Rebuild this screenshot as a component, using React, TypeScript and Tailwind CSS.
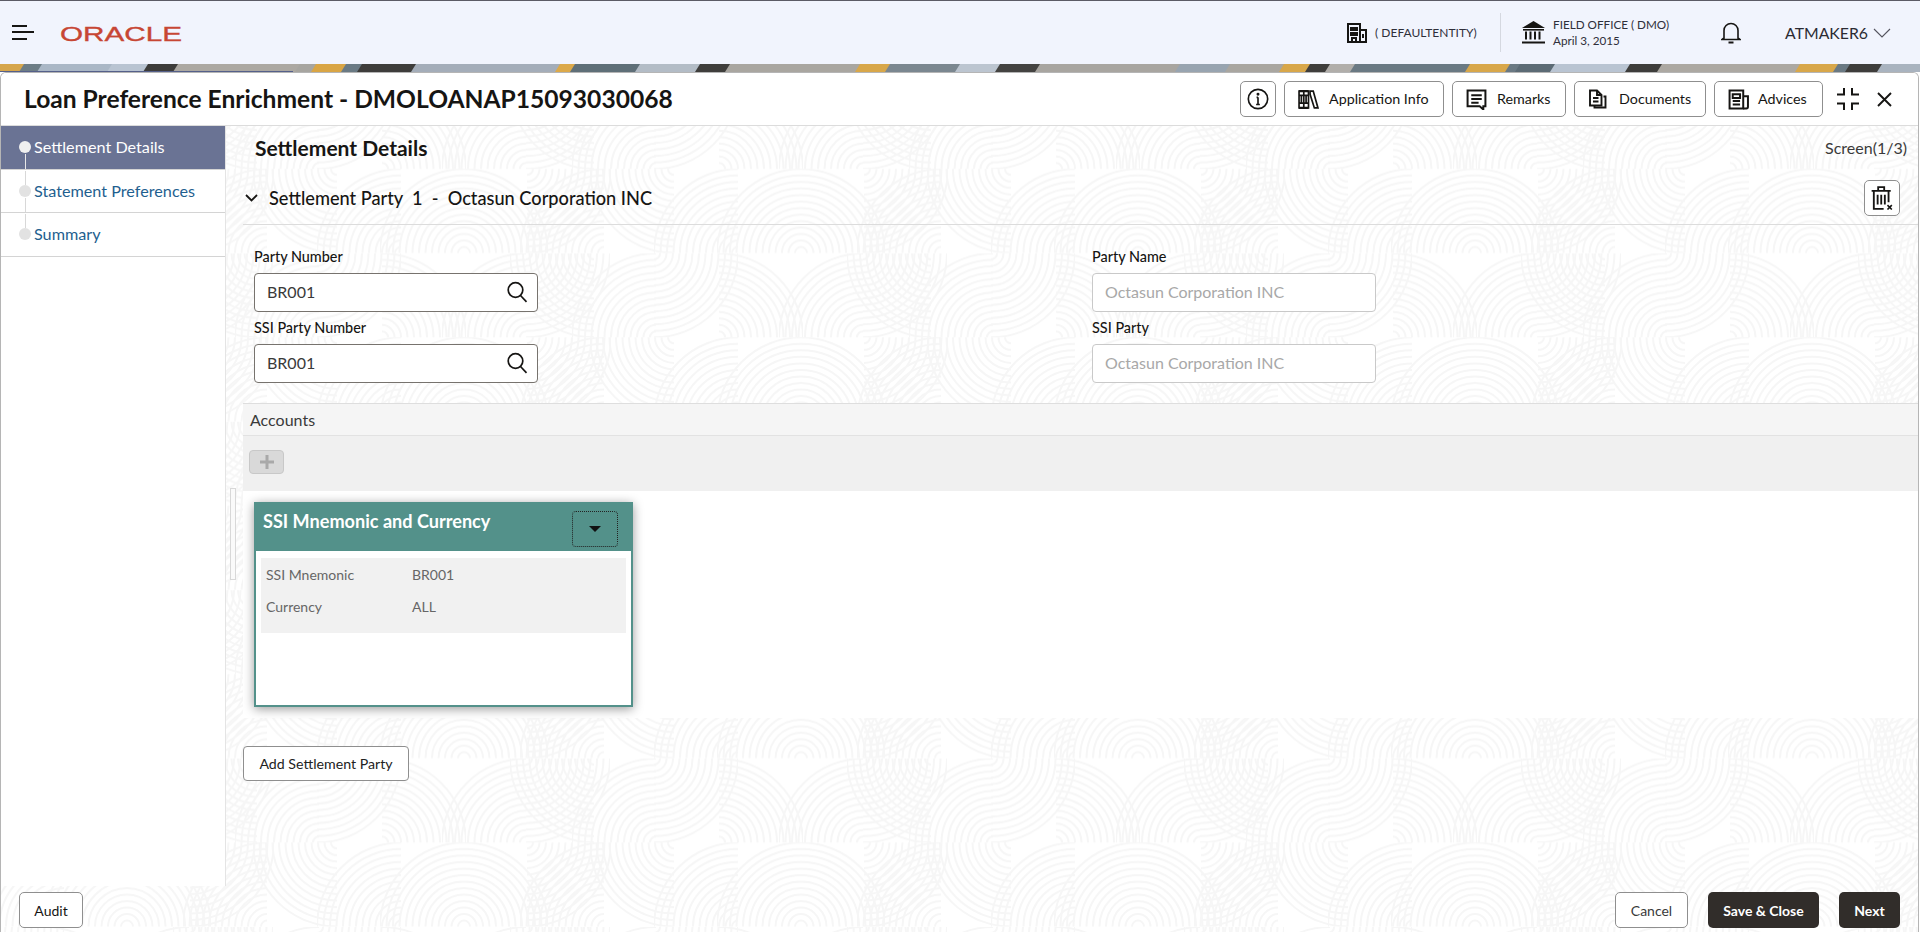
import React from "react";

const font = { fontFamily: '"Lato", "Liberation Sans", sans-serif' };

const quads: [number, number, string][] = [
  [13, 0, "lr"], [78, 84, "ur"], [222, 84, "ul"], [222, 0, "lr"], [15, 84, "ul"], [352, 84, "ul"],
  [97, 168, "ul"], [160, 168, "ul"], [160, 168, "ur"], [33, 84, "ll"], [370, 84, "ll"], [223, 84, "lr"], [300, 168, "ul"], [290, 0, "ll"],
];

function Pattern() {
  const radii = [] as number[];
  for (let r = 6; r <= 84; r += 6.5) radii.push(r);
  return (
    <svg className="absolute inset-0 w-full h-full" aria-hidden="true">
      <defs>
        <pattern id="fp" width="337" height="168.4" patternUnits="userSpaceOnUse" patternTransform="translate(303 12)">
          {quads.map(([cx, cy, q], i) => {
            const x = q[1] === "r" ? cx : cx - 84;
            const y = q[0] === "l" ? cy : cy - 84;
            return (
              <g key={i}>
                <clipPath id={`q${i}`}>
                  <rect x={x} y={y} width="84" height="84" />
                </clipPath>
                <g clipPath={`url(#q${i})`} fill="none" stroke="#f6f6f6" strokeWidth="2">
                  {radii.map((r) => (
                    <circle key={r} cx={cx} cy={cy} r={r} />
                  ))}
                </g>
              </g>
            );
          })}
        </pattern>
      </defs>
      <rect width="100%" height="100%" fill="url(#fp)" />
    </svg>
  );
}

const bands: [number, number, string][] = [
  [0, 24, "#d6a64c"], [24, 42, "#6d7d86"], [42, 112, "#aab7c6"], [112, 148, "#b9c4d2"], [148, 178, "#3d3c3a"], [178, 300, "#aca8a2"],
  [300, 316, "#a7a5a0"], [316, 346, "#d9a545"], [346, 362, "#6a7a84"], [362, 416, "#3e3d3b"], [416, 560, "#a4adb9"], [560, 575, "#dca94a"], [575, 640, "#5f6f78"],
  [640, 700, "#b3bcc6"], [700, 730, "#3f3e3c"], [730, 860, "#a9a6a0"], [860, 890, "#d8a74a"], [890, 960, "#7b8790"], [960, 1000, "#bcc5d0"], [1000, 1040, "#444341"],
  [1040, 1180, "#a8a5a0"], [1180, 1230, "#98a4b0"], [1230, 1284, "#a9a6a0"], [1284, 1310, "#d8a74a"], [1310, 1330, "#3f3e3c"], [1330, 1355, "#b1aeaa"], [1355, 1470, "#6a7983"],
  [1470, 1510, "#d8a74a"], [1510, 1520, "#6a7983"], [1520, 1555, "#5c6b75"], [1555, 1630, "#b9c4d2"], [1630, 1662, "#3e3d3b"], [1662, 1800, "#aca8a2"], [1800, 1838, "#d8a74a"],
  [1838, 1850, "#6a7983"], [1850, 1882, "#3e3d3b"], [1882, 1920, "#a9b3bf"],
];

function Banner() {
  return (
    <svg className="block w-full h-2" viewBox="0 0 1920 8" preserveAspectRatio="none" aria-hidden="true">
      {bands.map(([a, b, c]) => (
        <polygon key={a} points={`${a},0 ${b + 5},0 ${b},8 ${a - 5},8`} fill={c} />
      ))}
    </svg>
  );
}

const Stroke = ({ children, size = 20, w = 1.6, vb = 20 }: { children: React.ReactNode; size?: number; w?: number; vb?: number }) => (
  <svg width={size} height={size} viewBox={`0 0 ${vb} ${vb}`} fill="none" stroke="#161513" strokeWidth={w} className="shrink-0">
    {children}
  </svg>
);

const BooksIcon = () => (
  <Stroke size={21}>
    <path d="M1 2h4.5v16H1zM5.5 2H10v16H5.5zM1 6h9M1 13.5h9M3.2 6v7.5M7.7 6v7.5" />
    <path d="M11.5 2h3L19 18h-3.4L11.5 5z" />
    <path d="M1 2h9M1 18h9" strokeWidth="2" />
  </Stroke>
);
const RemarksIcon = () => (
  <Stroke size={21} w={1.9}>
    <path d="M1.5 1.5h17v15h-2v3l-3.5-3H1.5z" />
    <path d="M5 6h10M5 9.5h10M5 13h7" />
  </Stroke>
);
const DocsIcon = () => (
  <Stroke size={20} w={1.9}>
    <path d="M2 1.5h7l4.5 4.5v10.5H2z" />
    <path d="M9 1.5V6h4.5M5 9h5.5M5 12.5h5.5" />
    <path d="M15.5 7.5h2v11h-11v-2" />
  </Stroke>
);
const AdvicesIcon = () => (
  <Stroke size={21} w={1.9}>
    <path d="M1.5 1.5h13v17h-13z" />
    <path d="M4.5 5h7v3.5h-7zM4.5 11.5h7M4.5 14.8h7" />
    <path d="M14.5 7h4.5v10a1.5 1.5 0 0 1-1.5 1.5h-3" />
  </Stroke>
);

function TopBtn({ w, icon, label, gap }: { w: string; icon: React.ReactNode; label: string; gap: string }) {
  return (
    <button className={`${w} ${gap} h-9 flex items-center pl-[13px] bg-white border border-[#8f8f8f] rounded-[5px] text-[14.3px] text-[#161513]`}>
      {icon}
      <span>{label}</span>
    </button>
  );
}

function Field({ label, value, search }: { label: string; value: string; search?: boolean }) {
  return (
    <div className="flex flex-col">
      <label className="h-5 leading-5 text-[14.4px] text-[#161513] font-medium">{label}</label>
      <div className={`mt-[6px] h-[39px] w-[284px] flex items-center justify-between pl-[12px] pr-[9px] pb-[1px] bg-white rounded-[4px] border ${search ? "border-[#77736e]" : "border-[#c9c9c9]"}`}>
        <span className={`text-[16px] ${search ? "text-[#3a3a3a]" : "text-[#a8a8a8]"}`}>{value}</span>
        {search && (
          <svg width="22" height="22" viewBox="0 0 22 22" fill="none" stroke="#161513" strokeWidth="1.7">
            <circle cx="9.5" cy="9" r="7.3" />
            <path d="M14.5 14.5l6 6.3" />
          </svg>
        )}
      </div>
    </div>
  );
}

function Step({ label, h, active, first, last }: { label: string; h: string; active?: boolean; first?: boolean; last?: boolean }) {
  return (
    <div className={`relative ${h} flex items-center pl-[33px] border-b border-[#d4d4d4] text-[16.2px] ${active ? "bg-[#6a7394] text-white" : "text-[#1f5f8f]"}`}>
      {!first && <span className="absolute left-[24px] top-[1px] h-[14px] w-px bg-[#d8d8d8]" />}
      {!last && <span className={`absolute left-[24px] top-[28px] bottom-0 w-px ${active ? "bg-[#e8e8e8]" : "bg-[#d8d8d8]"}`} />}
      <span className={`absolute left-[18px] top-[15px] w-3 h-3 rounded-full ${active ? "bg-[#f0f0f0]" : "bg-[#e2e2e2]"}`} />
      {label}
    </div>
  );
}

export default function App() {
  return (
    <div className="w-[1920px] h-[932px] overflow-hidden flex flex-col bg-white text-[#161513]" style={font}>
      <header className="h-16 shrink-0 border-t border-[#5b5b66] bg-[#f1f4fd] flex items-center">
        <svg width="22" height="15" viewBox="0 0 22 15" className="ml-3 shrink-0" fill="#161513">
          <rect x="0" y="0" width="15" height="2" />
          <rect x="0" y="6" width="22" height="2" />
          <rect x="0" y="13" width="15" height="2" />
        </svg>
        <svg width="124" height="20" viewBox="0 0 124 20" className="ml-[26px] shrink-0">
          <text x="0" y="17.5" fontFamily="Liberation Sans" fontSize="21" textLength="122" lengthAdjust="spacingAndGlyphs" fill="#c74634" stroke="#c74634" strokeWidth="0.35">
            ORACLE
          </text>
        </svg>
        <div className="flex-1" />
        <Stroke size={20} w={2}>
          <path d="M1 19V1h12v18M13 7h6v12M0 19h20M4 5h2v2H4zM8 5h2v2H8zM4 10h2v2H4zM8 10h2v2H8zM5 19v-4h4v4M16 11v4" />
        </Stroke>
        <span className="ml-2 text-[12px] text-[#2f2f3a] w-[125px]">( DEFAULTENTITY)</span>
        <div className="w-px h-[39px] bg-[#d5d8e0]" />
        <svg width="23" height="23" viewBox="0 0 23 23" fill="#161513" className="ml-[21px] shrink-0">
          <path d="M11.5 0L23 7H0z" />
          <rect x="1" y="8" width="21" height="1.6" />
          <rect x="3" y="10.5" width="2" height="8" />
          <rect x="7.5" y="10.5" width="2" height="8" />
          <rect x="12" y="10.5" width="2" height="8" />
          <rect x="16.5" y="10.5" width="2" height="8" />
          <rect x="0" y="20.5" width="23" height="2" />
        </svg>
        <div className="ml-2 w-[168px] text-[11.7px] leading-[16px] pb-[1px] text-[#2f2f3a]">
          <div>FIELD OFFICE ( DMO)</div>
          <div>April 3, 2015</div>
        </div>
        <svg width="20" height="22" viewBox="0 0 20 22" fill="none" stroke="#161513" strokeWidth="1.6" className="shrink-0">
          <path d="M3 16V8.5a7 7 0 0 1 14 0V16l2 1.5H1z" />
          <path d="M7.5 20.5h5" strokeWidth="2" />
        </svg>
        <span className="ml-[44px] text-[15.8px] text-[#2b2b33]">ATMAKER6</span>
        <svg width="18" height="10" viewBox="0 0 18 10" fill="none" stroke="#55555f" strokeWidth="1.1" className="ml-[5px] mr-[29px] shrink-0">
          <path d="M1 1l8 8 8-8" />
        </svg>
      </header>
      <div className="shrink-0 relative">
        <Banner />
        <div className="absolute left-0 bottom-0 w-[293px] h-px bg-[#55608a]" />
      </div>
      <div className="relative flex-1 min-h-0 mr-[1px] flex flex-col border border-b-0 border-[#b5b5b5] rounded-t-[6px] overflow-hidden bg-white">
        <Pattern />
        <div className="relative h-[53px] shrink-0 flex items-center bg-white border-b border-[#dcdcdc] pl-[23px]">
          <h1 className="text-[24.6px] font-bold text-[#161513]">Loan Preference Enrichment - DMOLOANAP15093030068</h1>
          <div className="flex-1" />
          <div className="flex items-center gap-2">
            <button className="w-9 h-9 flex items-center justify-center bg-white border border-[#8f8f8f] rounded-[5px]">
              <Stroke size={22} w={1.5}>
                <circle cx="10" cy="10" r="8.8" />
                <path d="M10 8.5V15M8.3 15h3.4M8.7 8.5H10" />
                <circle cx="10" cy="5.6" r=".6" fill="#161513" />
              </Stroke>
            </button>
            <TopBtn w="w-[160px]" gap="gap-[10px]" icon={<BooksIcon />} label="Application Info" />
            <TopBtn w="w-[114px]" gap="gap-[10px]" icon={<RemarksIcon />} label="Remarks" />
            <TopBtn w="w-[132px]" gap="gap-[11px]" icon={<DocsIcon />} label="Documents" />
            <TopBtn w="w-[109px]" gap="gap-[9px]" icon={<AdvicesIcon />} label="Advices" />
          </div>
          <svg width="22" height="22" viewBox="0 0 22 22" fill="none" stroke="#161513" strokeWidth="2" className="ml-[14px] shrink-0">
            <path d="M7 0v6.5H0M15 0v6.5h7M7 22v-6.5H0M15 22v-6.5h7" />
          </svg>
          <svg width="15" height="15" viewBox="0 0 15 15" fill="none" stroke="#161513" strokeWidth="1.9" className="ml-[18px] mr-[26px] shrink-0">
            <path d="M1 1l13 13M14 1L1 14" />
          </svg>
        </div>
        <div className="relative flex-1 min-h-0 flex">
          <aside className="w-[225px] shrink-0 bg-white border-r border-[#e4e4e4]">
            <Step h="h-[44px]" label="Settlement Details" active first />
            <Step h="h-[43px]" label="Statement Preferences" />
            <Step h="h-[44px]" label="Summary" last />
          </aside>
          <main className="relative flex-1 min-w-0 flex flex-col">
            <div className="absolute left-[4px] top-[362px] w-[6px] h-[92px] border border-[#d8d8d8] bg-[#fafafa]" />
            <div className="h-[44px] mb-[2px] shrink-0 flex items-center justify-between pl-[29px] pr-[11px]">
              <h2 className="text-[21px] font-bold">Settlement Details</h2>
              <span className="text-[16px] text-[#3a3a3a]">Screen(1/3)</span>
            </div>
            <div className="ml-[17px] h-[53px] shrink-0 flex items-center border-b border-[#dcdcdc] pl-[2px] pr-[18px]">
              <svg width="13" height="8" viewBox="0 0 13 8" fill="none" stroke="#161513" strokeWidth="1.8">
                <path d="M1 1l5.5 5.5L12 1" />
              </svg>
              <span className="ml-[11px] mt-[1px] text-[18.2px] font-medium whitespace-pre">{"Settlement Party  1  -  Octasun Corporation INC"}</span>
              <div className="flex-1" />
              <button className="w-9 h-9 flex items-center justify-center bg-white border border-[#8f8f8f] rounded-[5px]">
                <svg width="22" height="24" viewBox="0 0 20 22" fill="none" stroke="#161513" strokeWidth="1.7">
                  <path d="M0.5 4.5H18M6.5 4.5V1h5.5v3.5M2.5 4.5V21h9M16 4.5V15M6 8v9M9.3 8v9M12.6 8v9" />
                  <path d="M15 17.5l4 4M19 17.5l-4 4" strokeWidth="1.5" />
                </svg>
              </button>
            </div>
            <div className="pt-[22px] pl-[28px] grid grid-cols-[838px_284px] gap-y-[6px] shrink-0">
              <Field label="Party Number" value="BR001" search />
              <Field label="Party Name" value="Octasun Corporation INC" />
              <Field label="SSI Party Number" value="BR001" search />
              <Field label="SSI Party" value="Octasun Corporation INC" />
            </div>
            <section className="ml-[17px] mt-[20px] shrink-0 border-t border-[#dedede]">
              <div className="h-[32px] flex items-center pl-[7px] bg-[#f5f5f5] border-b border-[#e2e2e2] text-[16px] text-[#3a3a3a]">Accounts</div>
              <div className="h-[55px] bg-[#f0f0f0] pl-[6px] pt-[14px]">
                <div className="w-[35px] h-[24px] flex items-center justify-center bg-[#d9d9d9] border border-[#c8c8c8] rounded-[4px]">
                  <svg width="14" height="14" viewBox="0 0 14 14" fill="#a9a9a9">
                    <path d="M5.5 0h3v5.5H14v3H8.5V14h-3V8.5H0v-3h5.5z" />
                  </svg>
                </div>
              </div>
              <div className="h-[227px] bg-white pl-[11px] pt-[11px]">
                <div className="w-[379px] h-[205px] bg-white border-2 border-[#53918a] shadow-[0_2px_10px_rgba(0,0,0,0.4)]">
                  <div className="h-[47px] bg-[#53918a] flex justify-between pl-[7px] pr-[13px] pt-[5px]">
                    <span className="text-[18.1px] font-bold text-white leading-[24px]">SSI Mnemonic and Currency</span>
                    <div className="w-[46px] h-[36px] flex items-center justify-center border border-dotted border-[#222] rounded-[4px] mt-[2px]">
                      <span className="w-0 h-0 border-x-[6px] border-x-transparent border-t-[6px] border-t-[#111]" />
                    </div>
                  </div>
                  <div className="mx-[5px] mt-[7px] h-[75px] bg-[#f1f1f1] pl-[5px] text-[14px] text-[#666]">
                    <div className="grid grid-cols-[146px_1fr] h-[32px] items-center">
                      <span>SSI Mnemonic</span>
                      <span>BR001</span>
                    </div>
                    <div className="grid grid-cols-[146px_1fr] h-[32px] items-center">
                      <span>Currency</span>
                      <span>ALL</span>
                    </div>
                  </div>
                </div>
              </div>
            </section>
            <div className="ml-[17px] mt-[28px] shrink-0">
              <button className="w-[166px] h-[35px] bg-white border border-[#8f8f8f] rounded-[4px] text-[14.2px] text-[#222]">Add Settlement Party</button>
            </div>
            <div className="flex-1" />
          </main>
        </div>
        <div className="relative h-[46px] shrink-0 flex items-start pt-[6px] pl-[18px] pr-[18px]">
          <button className="w-[64px] h-9 bg-white border border-[#8f8f8f] rounded-[5px] text-[14px]">Audit</button>
          <div className="flex-1" />
          <button className="w-[73px] h-9 bg-white border border-[#8f8f8f] rounded-[5px] text-[14px] text-[#3a3a3a]">Cancel</button>
          <button className="ml-[20px] w-[111px] h-9 bg-[#312d2a] rounded-[5px] text-[14px] font-bold text-white">Save &amp; Close</button>
          <button className="ml-[20px] w-[61px] h-9 bg-[#312d2a] rounded-[5px] text-[14px] font-bold text-white">Next</button>
        </div>
      </div>
    </div>
  );
}
